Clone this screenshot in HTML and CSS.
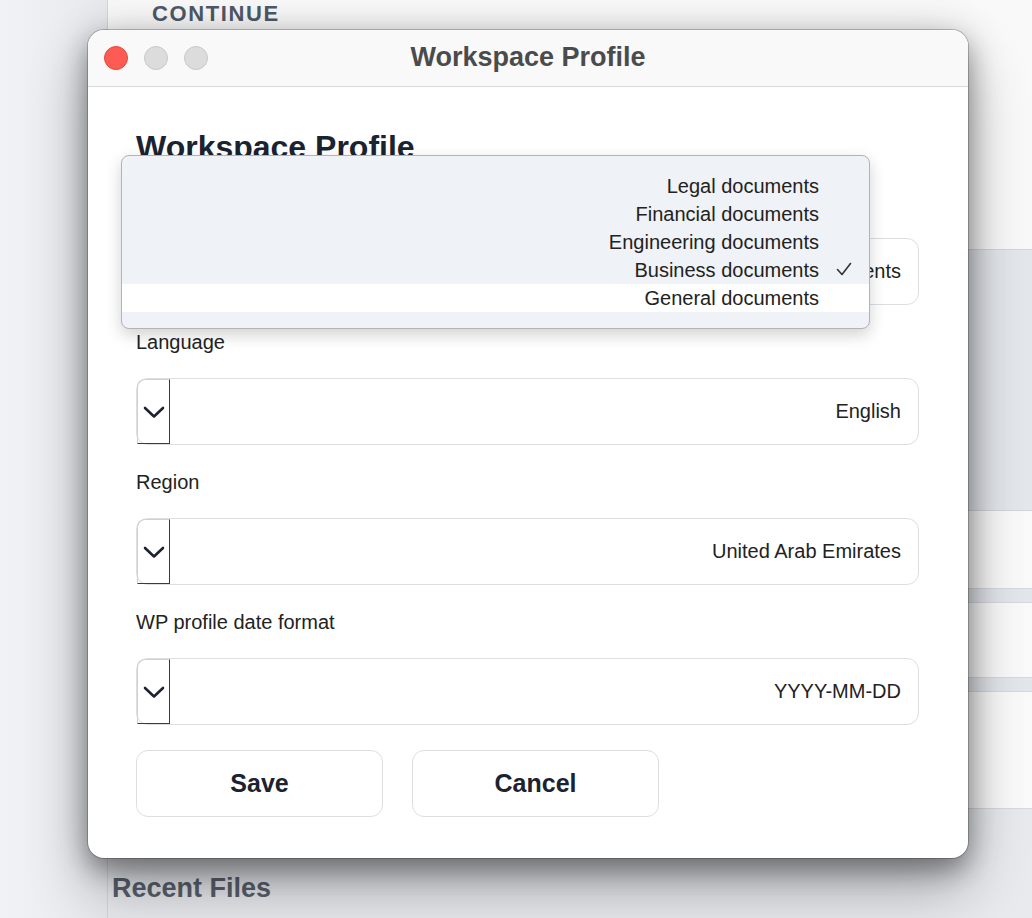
FILE: index.html
```html
<!DOCTYPE html>
<html lang="en">
<head>
    <meta charset="UTF-8">
    <meta name="viewport" content="width=device-width, initial-scale=1.0">
    <title>Workspace Profile</title>
    <link rel="stylesheet" href="styles.css">
</head>
<body>
    <div class="app">
        <aside class="sidebar"></aside>

        <main class="main">
            <div class="top-area">
                <span class="continue">CONTINUE</span>
            </div>
            <div class="panel-gray"></div>
            <div class="row" style="height: 77px"></div>
            <div class="band"></div>
            <div class="row" style="height: 74px"></div>
            <div class="band"></div>
            <div class="row" style="height: 116px"></div>
            <div class="recent">
                <h3>Recent Files</h3>
            </div>
        </main>
    </div>

    <!-- Modal window -->
    <div class="window">
        <div class="titlebar">
            <div class="lights">
                <span class="light red"></span>
                <span class="light"></span>
                <span class="light"></span>
            </div>
            <div class="window-title">Workspace Profile</div>
            <div></div>
        </div>

        <div class="window-body">
            <h1>Workspace Profile</h1>

            <div class="fields">
                <div class="field">
                    <label>Document type</label>
                    <div class="select">
                        <span class="select-arrow">
                            <svg width="22" height="13" viewBox="0 0 22 13"><path d="M2 2 L11 10.5 L20 2" fill="none" stroke="#1c2233" stroke-width="2.6" stroke-linecap="round" stroke-linejoin="round"/></svg>
                        </span>
                        <span class="select-value">Business documents</span>
                    </div>
                </div>

                <div class="field">
                    <label>Language</label>
                    <div class="select">
                        <span class="select-arrow">
                            <svg width="22" height="13" viewBox="0 0 22 13"><path d="M2 2 L11 10.5 L20 2" fill="none" stroke="#1c2233" stroke-width="2.6" stroke-linecap="round" stroke-linejoin="round"/></svg>
                        </span>
                        <span class="select-value">English</span>
                    </div>
                </div>

                <div class="field">
                    <label>Region</label>
                    <div class="select">
                        <span class="select-arrow">
                            <svg width="22" height="13" viewBox="0 0 22 13"><path d="M2 2 L11 10.5 L20 2" fill="none" stroke="#1c2233" stroke-width="2.6" stroke-linecap="round" stroke-linejoin="round"/></svg>
                        </span>
                        <span class="select-value">United Arab Emirates</span>
                    </div>
                </div>

                <div class="field">
                    <label>WP profile date format</label>
                    <div class="select">
                        <span class="select-arrow">
                            <svg width="22" height="13" viewBox="0 0 22 13"><path d="M2 2 L11 10.5 L20 2" fill="none" stroke="#1c2233" stroke-width="2.6" stroke-linecap="round" stroke-linejoin="round"/></svg>
                        </span>
                        <span class="select-value">YYYY-MM-DD</span>
                    </div>
                </div>

                <div class="buttons">
                    <button class="btn">Save</button>
                    <button class="btn">Cancel</button>
                </div>
            </div>
        </div>

        <!-- Open dropdown for document type -->
        <div class="dropdown">
            <div class="option">Legal documents</div>
            <div class="option">Financial documents</div>
            <div class="option">Engineering documents</div>
            <div class="option">Business documents
                <svg class="check" width="16" height="14" viewBox="0 0 16 14"><path d="M1.5 7.5 L6 12.5 L14.5 1.5" fill="none" stroke="#333" stroke-width="1.6" stroke-linecap="round" stroke-linejoin="round"/></svg>
            </div>
            <div class="option hover">General documents</div>
        </div>
    </div>
</body>
</html>
```

FILE: styles.css
```css
body {
    margin: 0;
    font-family: "Liberation Sans", Arial, sans-serif;
    background-color: #f4f5f7;
    overflow: hidden;
}

.app {
    display: flex;
    height: 918px;
}

.sidebar {
    width: 107px;
    background: linear-gradient(to right, #f0f2f5, #e7e9ed);
    border-right: 1px solid #d3d6db;
}

.main {
    flex: 1;
    display: flex;
    flex-direction: column;
    background-color: #f9f9fa;
}

.top-area {
    height: 249px;
    padding: 3px 0 0 44px;
    box-sizing: border-box;
}

.continue {
    font-size: 22px;
    line-height: 22px;
    font-weight: bold;
    letter-spacing: 1.6px;
    color: #4f5967;
}

.panel-gray {
    height: 260px;
    background-color: #e4e7ec;
    border-top: 1px solid #d3d6db;
    border-bottom: 1px solid #d3d6db;
}

.row {
    background-color: #fafafa;
}

.band {
    height: 13px;
    background-color: #e3e6eb;
    border-top: 1px solid #d6d9de;
    border-bottom: 1px solid #d6d9de;
}

.recent {
    flex: 1;
    background-color: #e8eaee;
    border-top: 1px solid #d6d9de;
    padding: 64px 0 0 4px;
}

.recent h3 {
    margin: 0;
    font-size: 27px;
    line-height: 30px;
    color: #59616d;
}

/* window */
.window {
    position: absolute;
    left: 88px;
    top: 30px;
    width: 880px;
    background-color: #fff;
    border-radius: 16px;
    box-shadow: 0 0 0 1px rgba(0, 0, 0, 0.22), 0 12px 24px rgba(0, 0, 0, 0.3), 0 30px 60px rgba(0, 0, 0, 0.3), 0 0 40px rgba(0, 0, 0, 0.14);
}

.titlebar {
    height: 56px;
    display: grid;
    grid-template-columns: 1fr auto 1fr;
    align-items: center;
    background-color: #f9f9f9;
    border-bottom: 1px solid #d9d9d9;
    border-radius: 16px 16px 0 0;
}

.lights {
    display: flex;
    gap: 16px;
    padding-left: 16px;
}

.light {
    width: 22px;
    height: 22px;
    border-radius: 50%;
    background-color: #dcdcdc;
    border: 1px solid #c9c9c9;
}

.light.red {
    background-color: #fd5b53;
    border-color: #e4473f;
}

.window-title {
    font-size: 27px;
    font-weight: bold;
    color: #4b4b4b;
    padding-bottom: 2px;
}

.window-body {
    padding: 42px 49px 41px 48px;
}

h1 {
    margin: 0 0 25px;
    font-size: 32px;
    line-height: 36px;
    color: #1b2230;
}

.fields {
    display: flex;
    flex-direction: column;
    gap: 25px;
}

label {
    display: block;
    font-size: 20px;
    line-height: 24px;
    margin-bottom: 24px;
    color: #222;
}

.select {
    height: 67px;
    box-sizing: border-box;
    display: flex;
    align-items: stretch;
    border: 1.5px solid #dddee2;
    border-radius: 12px;
}

.select-arrow {
    width: 31px;
    display: flex;
    align-items: center;
    justify-content: center;
    border-right: 1.5px solid #3a3a3a;
    border-bottom: 1.5px solid #3a3a3a;
    border-top: 1px solid #d0d0d0;
    border-left: 1px solid #d0d0d0;
    border-radius: 8px 0 0 0;
    padding-top: 2px;
}

.select-value {
    margin-left: auto;
    display: flex;
    align-items: center;
    padding-right: 17px;
    font-size: 20px;
    color: #222;
}

.buttons {
    display: flex;
    gap: 29px;
}

.btn {
    width: 247px;
    height: 67px;
    background-color: #fff;
    border: 1.5px solid #dddee2;
    border-radius: 12px;
    font-family: "Liberation Sans", Arial, sans-serif;
    font-size: 25px;
    font-weight: bold;
    color: #1b2230;
}

/* dropdown menu */
.dropdown {
    position: absolute;
    left: 33px;
    top: 125px;
    width: 749px;
    box-sizing: border-box;
    padding: 16px 0 16px;
    background-color: #eff2f6;
    border: 1px solid #b3b3b5;
    border-radius: 8px;
    box-shadow: 0 6px 16px rgba(0, 0, 0, 0.18);
}

.option {
    position: relative;
    height: 28px;
    line-height: 28px;
    text-align: right;
    padding-right: 50px;
    font-size: 20px;
    color: #222;
}

.option.hover {
    background-color: #fff;
}

.check {
    position: absolute;
    right: 17px;
    top: 6px;
}
```
